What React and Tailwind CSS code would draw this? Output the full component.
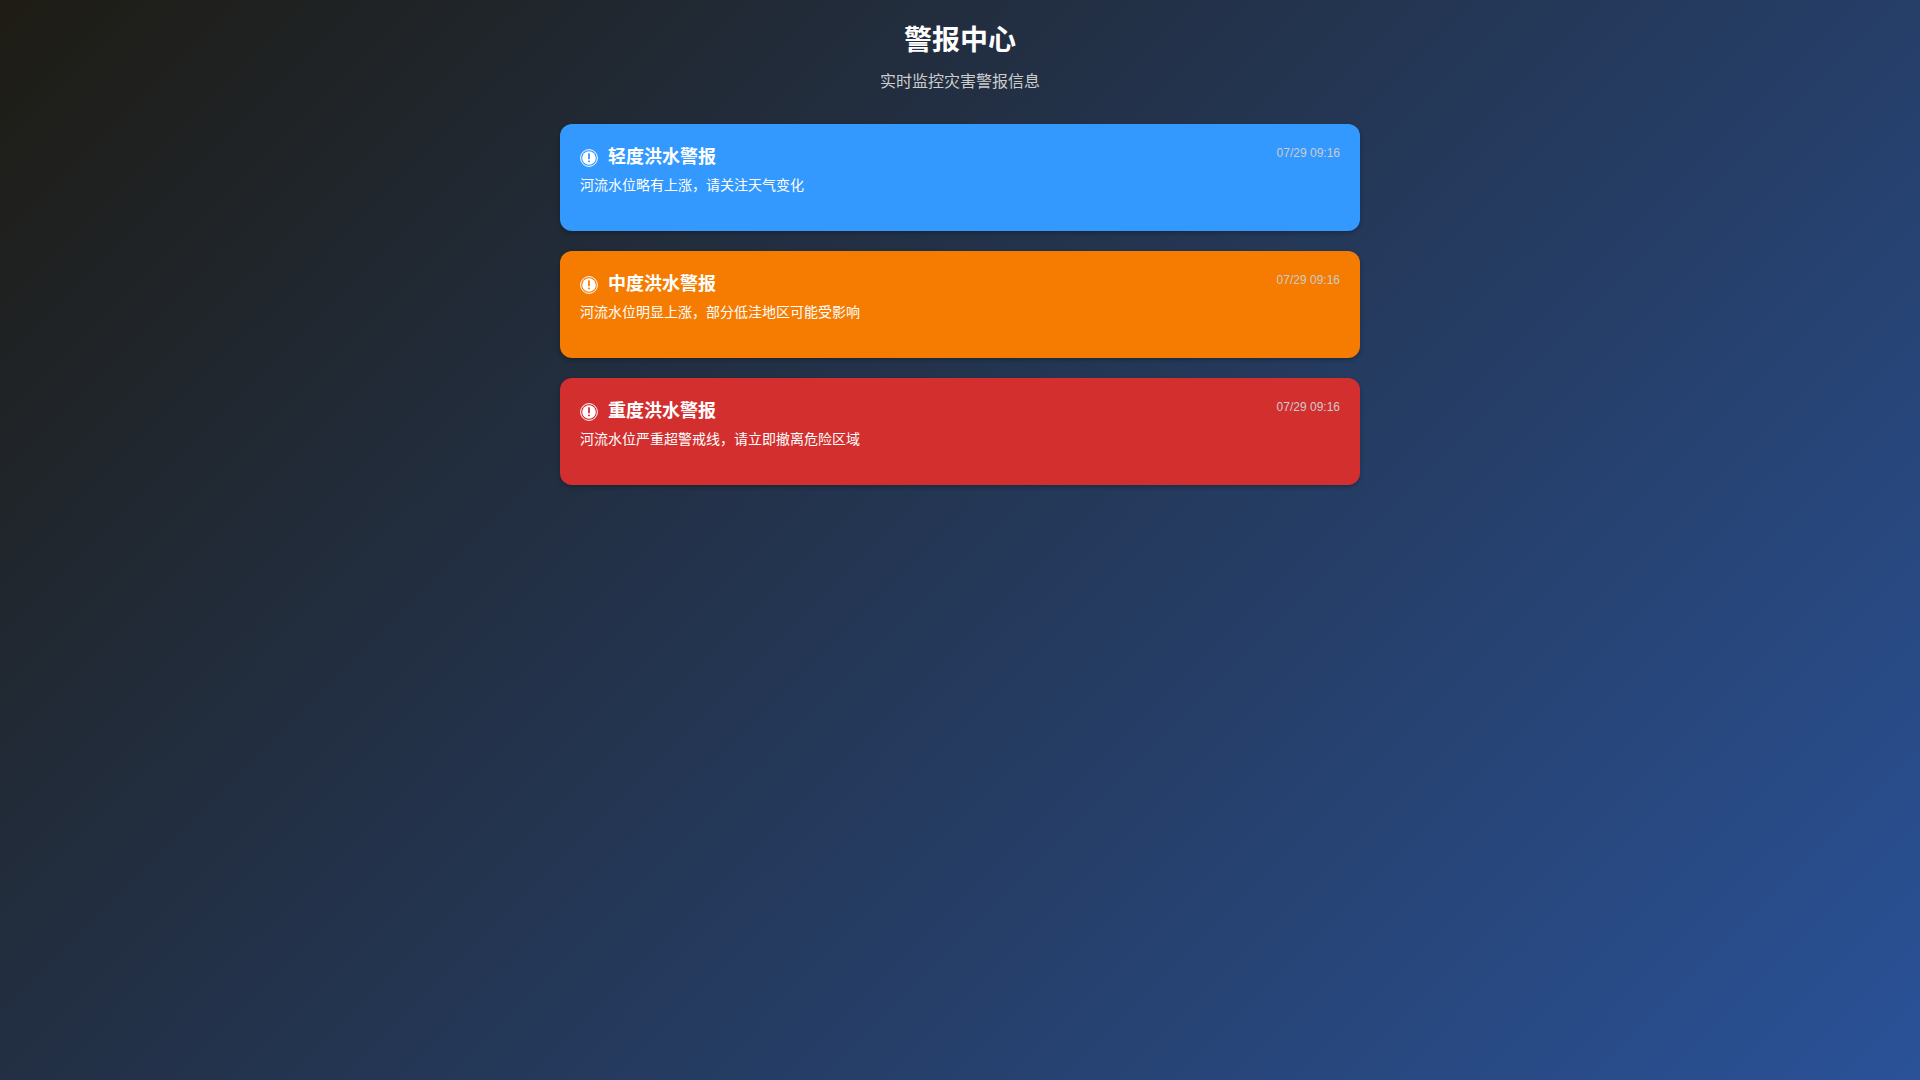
import React from "react";

const alerts = [
  {
    id: 1,
    title: "轻度洪水警报",
    message: "河流水位略有上涨，请关注天气变化",
    time: "07/29 09:16",
    color: "bg-[#3399ff]",
    mark: "fill-[#3399ff]",
  },
  {
    id: 2,
    title: "中度洪水警报",
    message: "河流水位明显上涨，部分低洼地区可能受影响",
    time: "07/29 09:16",
    color: "bg-[#f57c00]",
    mark: "fill-[#f57c00]",
  },
  {
    id: 3,
    title: "重度洪水警报",
    message: "河流水位严重超警戒线，请立即撤离危险区域",
    time: "07/29 09:16",
    color: "bg-[#d32f2f]",
    mark: "fill-[#d32f2f]",
  },
];

const AlertIcon = ({ mark }) => (
  <svg viewBox="0 0 18 18" className="h-[18px] w-[18px] shrink-0" aria-hidden="true">
    <circle cx="9" cy="9" r="8.4" fill="none" stroke="white" strokeWidth="1" />
    <circle cx="9" cy="9" r="6.8" fill="white" />
    <rect x="8.1" y="4.2" width="1.8" height="6" rx="0.4" className={mark} />
    <rect x="8.1" y="11.6" width="1.8" height="1.6" rx="0.4" className={mark} />
  </svg>
);

const AlertCard = ({ alert }) => (
  <li
    className={`flex items-start justify-between rounded-xl p-5 pb-[35px] shadow-[0_2px_4px_rgba(0,0,0,0.25)] ${alert.color}`}
  >
    <div>
      <div className="flex items-center gap-2.5">
        <div className="pt-0.5">
          <AlertIcon mark={alert.mark} />
        </div>
        <h2 className="text-lg leading-[26px] font-bold">{alert.title}</h2>
      </div>
      <p className="mt-[5px] text-sm leading-[21px]">{alert.message}</p>
    </div>
    <time className="text-xs leading-[18px] text-[#ccc]">{alert.time}</time>
  </li>
);

const App = () => {
  return (
    <div className="min-h-screen bg-[linear-gradient(135deg,#1e1c14,#2a5298)] px-5 py-5 font-['Liberation_Sans','Noto_Sans_CJK_SC',sans-serif] text-white">
      <header className="text-center">
        <h1 className="text-[28px] leading-[42px] font-bold">警报中心</h1>
        <p className="mt-2 text-base leading-6 text-[#ccc]">实时监控灾害警报信息</p>
      </header>
      <ul className="mx-auto mt-[30px] flex max-w-[800px] flex-col gap-5">
        {alerts.map((alert) => (
          <AlertCard key={alert.id} alert={alert} />
        ))}
      </ul>
    </div>
  );
};

export default App;
